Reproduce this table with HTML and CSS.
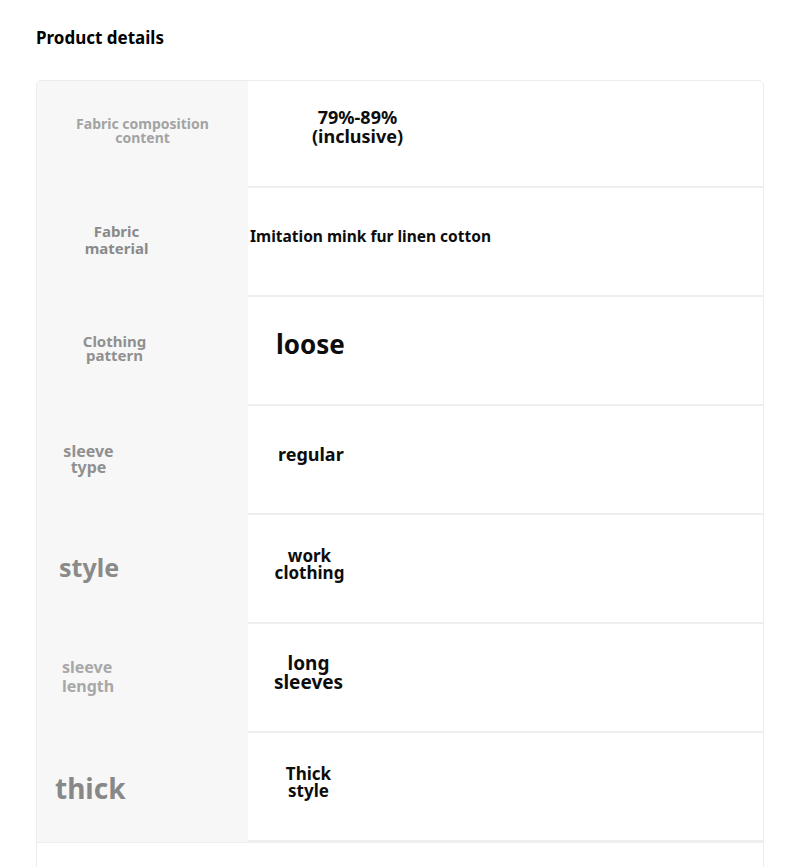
FILE: index.html
```html
<!DOCTYPE html>
<html>
<head>
<meta charset="utf-8">
<link rel="stylesheet" href="styles.css">
</head>
<body>
<h1 class="title">Product details</h1>
<div class="table">
  <div class="row r1">
    <div class="label"><span>Fabric composition<br>content</span></div>
    <div class="value"><span>79%-89%<br>(inclusive)</span></div>
  </div>
  <div class="row r2">
    <div class="label"><span>Fabric<br>material</span></div>
    <div class="value"><span>Imitation mink fur linen cotton</span></div>
  </div>
  <div class="row r3">
    <div class="label"><span>Clothing<br>pattern</span></div>
    <div class="value"><span>loose</span></div>
  </div>
  <div class="row r4">
    <div class="label"><span>sleeve<br>type</span></div>
    <div class="value"><span>regular</span></div>
  </div>
  <div class="row r5">
    <div class="label"><span>style</span></div>
    <div class="value"><span>work<br>clothing</span></div>
  </div>
  <div class="row r6">
    <div class="label"><span>sleeve<br>length</span></div>
    <div class="value"><span>long<br>sleeves</span></div>
  </div>
  <div class="row r7">
    <div class="label"><span>thick</span></div>
    <div class="value"><span>Thick<br>style</span></div>
  </div>
  <div class="row r8">
    <div class="blank"></div>
  </div>
</div>
</body>
</html>
```
FILE: styles.css
```css
html, body {
  margin: 0;
  padding: 0;
  background: #ffffff;
}
body {
  font-family: "Noto Sans", "Open Sans", sans-serif;
  font-weight: 700;
  color: #111;
  width: 800px;
  height: 867px;
  overflow: hidden;
}
.title {
  margin: 0;
  padding: 27px 0 0 36px;
  height: 80px;
  box-sizing: border-box;
  font-size: 17px;
  font-weight: 700;
  line-height: 22px;
  color: #000;
}
.table {
  margin: 0 0 0 36px;
  width: 728px;
  border: 1px solid #ececec;
  border-radius: 5px 5px 0 0;
  box-sizing: border-box;
  overflow: hidden;
}
.row {
  display: grid;
  grid-template-columns: 211px 1fr;
  height: 109px;
}
.r1 { height: 107px; }
.label {
  background: #f7f7f7;
  display: flex;
  align-items: center;
  justify-content: center;
  color: #8a8a8a;
  text-align: center;
  line-height: 1;
}
.value {
  border-bottom: 2px solid #eeeeee;
  display: flex;
  align-items: center;
  justify-content: center;
  text-align: center;
  line-height: 1.05;
  color: #0d0d0d;
}
.r8 { display: block; height: 30px; border-top: 1px solid #eee; }

.r1 .label { font-size: 14px; color: #a3a3a3; padding-bottom: 8px; }
.r1 .value { font-size: 18px; padding-right: 296px; padding-bottom: 14px; }

.r2 .label { font-size: 15px; color: #8a8a8a; padding-right: 52px; padding-bottom: 6px; line-height: 1.07; }
.r2 .value { font-size: 15.5px; justify-content: flex-start; padding-left: 2px; padding-bottom: 10px; }

.r3 .label { font-size: 15px; color: #909090; padding-right: 56px; padding-bottom: 7px; line-height: 0.95; }
.r3 .value { font-size: 26px; justify-content: flex-start; padding-left: 28px; padding-bottom: 12px; }

.r4 .label { font-size: 16px; color: #909090; padding-right: 108px; padding-bottom: 2px; line-height: 0.95; }
.r4 .value { font-size: 18px; justify-content: flex-start; padding-left: 30px; padding-bottom: 11px; }

.r5 .label { font-size: 25px; color: #8a8a8a; justify-content: flex-start; padding-left: 22px; padding-bottom: 4px; }
.r5 .value { font-size: 17px; padding-right: 392px; padding-bottom: 10px; line-height: 1; }

.r6 .label { font-size: 16px; color: #a8a8a8; justify-content: flex-start; padding-left: 25px; padding-bottom: 4px; text-align: left; line-height: 1.15; }
.r6 .value { font-size: 19px; padding-right: 394px; padding-bottom: 10px; line-height: 1; }

.r7 .label { font-size: 28px; color: #888; justify-content: flex-start; padding-left: 18px; }
.r7 .value { font-size: 17px; padding-right: 394px; padding-bottom: 10px; line-height: 1; }
```
